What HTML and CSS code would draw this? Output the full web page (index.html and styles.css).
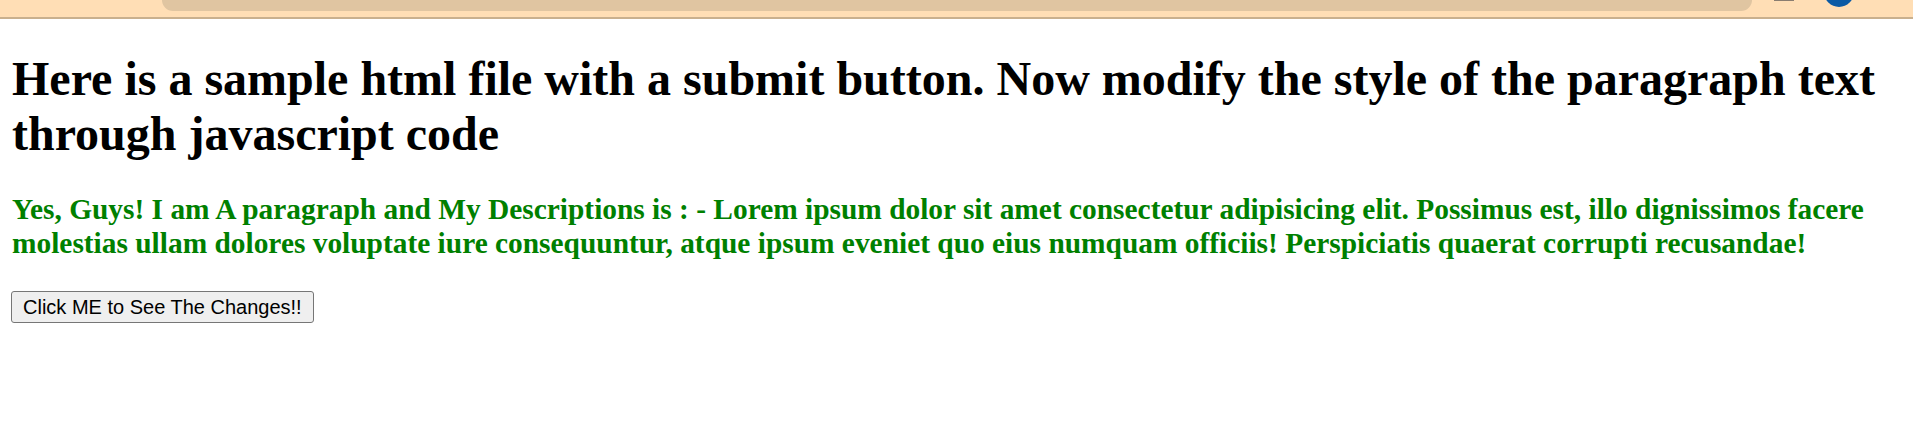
FILE: index.html
```html
<!DOCTYPE html>
<html>
<head>
<meta charset="utf-8">
<link rel="stylesheet" href="styles.css">
</head>
<body>
<div class="chrome">
  <div class="chrome-left"></div>
  <div class="address"></div>
  <div class="chrome-right">
    <span class="tool"></span>
    <span class="avatar"></span>
  </div>
</div>
<main class="page">
  <h1 class="title">Here is a sample html file with a submit button. Now modify the style of the paragraph text through javascript code</h1>
  <p class="desc">Yes, Guys! I am A paragraph and My Descriptions is : - Lorem ipsum dolor sit amet consectetur adipisicing elit. Possimus est, illo dignissimos facere molestias ullam dolores voluptate iure consequuntur, atque ipsum eveniet quo eius numquam officiis! Perspiciatis quaerat corrupti recusandae!</p>
  <button class="btn" type="button">Click ME to See The Changes!!</button>
</main>
</body>
</html>
```
FILE: styles.css
```css
html, body {
  margin: 0;
  padding: 0;
  background: #ffffff;
}
body {
  font-family: "Liberation Serif", "Times New Roman", serif;
  width: 1913px;
  height: 431px;
  overflow: hidden;
}
.chrome {
  height: 17px;
  background: #ffdeb5;
  border-bottom: 2px solid #c9b08e;
  display: flex;
  align-items: flex-start;
  overflow: hidden;
}
.chrome-left {
  width: 162px;
  flex: none;
}
.address {
  width: 1590px;
  height: 11px;
  background: #e0c5a1;
  border-radius: 0 0 18px 18px;
  flex: none;
}
.chrome-right {
  display: flex;
  align-items: flex-start;
  gap: 30px;
  padding-left: 22px;
}
.tool {
  width: 20px;
  height: 1px;
  background: #8a7d70;
}
.avatar {
  width: 30px;
  height: 30px;
  border-radius: 50%;
  background: #0a5aa5;
  margin-top: -23px;
}
.page {
  padding: 32px 12px 0;
}
.title {
  margin: 0;
  font-size: 48px;
  font-weight: bold;
  line-height: 55px;
  color: #000000;
}
.desc {
  margin: 31px 0 0;
  font-size: 29.4px;
  font-weight: bold;
  line-height: 34px;
  color: #008000;
}
.btn {
  display: block;
  margin: 31px 0 0 -1px;
  height: 32px;
  padding: 0 11px;
  font-family: "Liberation Sans", Arial, sans-serif;
  font-size: 20px;
  color: #000000;
  background: #efefef;
  border: 1px solid #767676;
  border-radius: 3px;
}
```
